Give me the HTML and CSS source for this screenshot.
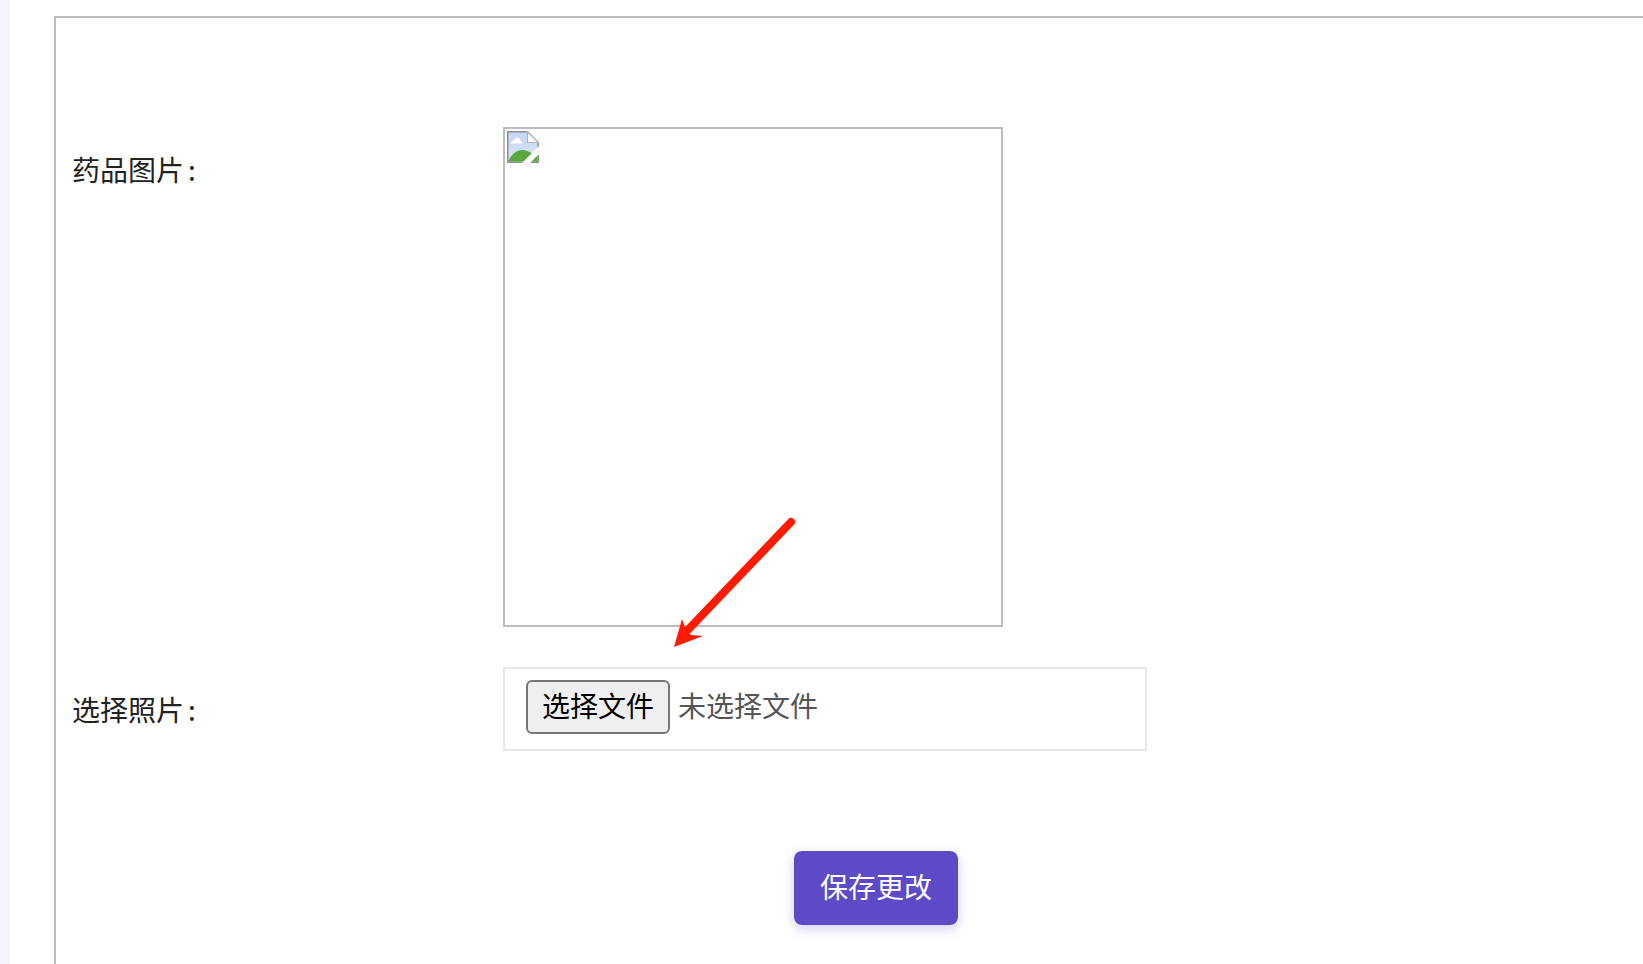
FILE: index.html
```html
<!DOCTYPE html>
<html lang="zh-CN">
<head>
    <meta charset="UTF-8">
    <meta name="viewport" content="width=device-width, initial-scale=1.0">
    <title>修改药品</title>
    <link rel="stylesheet" href="styles.css">
</head>
<body>
    <div class="side-strip"></div>
    <div class="content">
        <form class="edit-panel">
            <div class="form-row row-image">
                <label class="form-label">药品图片<span class="colon">:</span></label>
                <div class="image-box">
                    <svg class="broken-icon" viewBox="0 0 32 32" width="32" height="32">
                        <defs>
                            <linearGradient id="sky" x1="0" y1="0" x2="0" y2="1">
                                <stop offset="0" stop-color="#c3d6f2"/>
                                <stop offset="1" stop-color="#d9e6f8"/>
                            </linearGradient>
                        </defs>
                        <path d="M0.75 0.75H20.5L31.25 11.5V31.25H0.75Z" fill="url(#sky)" stroke="#8f8f8f" stroke-width="1.5"/>
                        <path d="M20.5 0.75V11.5H31.25Z" fill="#fff" stroke="#b5b5b5" stroke-width="1.2"/>
                        <path d="M4 12.500c0-1.800 1.300-2.700 2.800-2.700C7.300 7.500 8.700 6.500 10 6.500c1.500 0 2.800 1 3.200 3.200 1.300 0 2.300 1.200 2.300 2.800Z" fill="#fff"/>
                        <path d="M1.500 30.500V30C4 24 9 19 15 19C19 19 23 21 26 23L30.500 24V30.500Z" fill="#5aa83c"/>
                        <path d="M15 32L32 15V23L23 32Z" fill="#fff"/>
                    </svg>
                </div>
            </div>
            <div class="form-row row-file">
                <label class="form-label">选择照片<span class="colon">:</span></label>
                <div class="file-box">
                    <button type="button" class="file-btn">选择文件</button>
                    <span class="file-status">未选择文件</span>
                </div>
            </div>
            <div class="form-actions">
                <button type="button" class="save-btn">保存更改</button>
            </div>
        </form>
    </div>

    <svg class="arrow-mark" width="140" height="140" viewBox="0 0 140 140">
        <path d="M131 12L24 124" fill="none" stroke="#ff1a00" stroke-width="8" stroke-linecap="round"/>
        <path d="M14 137L22 109L26 120L31 125L43 126Z" fill="#ff1a00"/>
    </svg>
</body>
</html>
```

FILE: styles.css
```css
html, body {
    height: 100%;
}
body {
    margin: 0;
    display: flex;
    overflow: hidden;
    background: #fff;
    font-family: "Noto Sans CJK SC", "Liberation Sans", sans-serif;
    color: #222;
}
.side-strip {
    width: 10px;
    flex-shrink: 0;
    background: #f6f6fa;
}
.content {
    box-sizing: border-box;
    flex: 1;
    padding: 16px 0 0 44px;
}
.edit-panel {
    box-sizing: border-box;
    height: 100%;
    padding: 109px 16px 0 16px;
    border: solid #bdbdbd;
    border-width: 2px 0 0 2px;
}
.form-row {
    display: flex;
}
.row-file {
    margin-top: 40px;
    align-items: center;
}
.form-label {
    width: 431px;
    flex-shrink: 0;
    font-size: 28px;
    line-height: 40px;
}
.colon {
    margin-left: 4px;
}
.row-image .form-label {
    padding-top: 22px;
}
.image-box {
    box-sizing: border-box;
    width: 500px;
    height: 500px;
    padding: 2px;
    border: 2px solid #bdbdbd;
}
.broken-icon {
    display: block;
}
.file-box {
    box-sizing: border-box;
    width: 644px;
    height: 84px;
    padding: 11px 21px 0 21px;
    display: flex;
    align-items: flex-start;
    gap: 8px;
    border: 2px solid #e8e8e8;
}
.file-btn {
    box-sizing: border-box;
    width: 144px;
    height: 54px;
    padding: 0 0 4px 0;
    font: inherit;
    font-size: 28px;
    color: #000;
    background: #efefef;
    border: 2px solid #767676;
    border-radius: 6px;
}
.file-status {
    font-size: 28px;
    line-height: 51px;
    color: #555;
}
.form-actions {
    display: flex;
    margin-top: 100px;
    padding-left: 722px;
}
.save-btn {
    box-sizing: border-box;
    width: 164px;
    height: 74px;
    padding: 0 0 4px 0;
    font: inherit;
    font-size: 28px;
    color: #fff;
    background: #5c4ac7;
    border: none;
    border-radius: 8px;
    box-shadow: 0 4px 12px rgba(92, 74, 199, 0.25);
}
.arrow-mark {
    position: absolute;
    left: 660px;
    top: 510px;
}
```
